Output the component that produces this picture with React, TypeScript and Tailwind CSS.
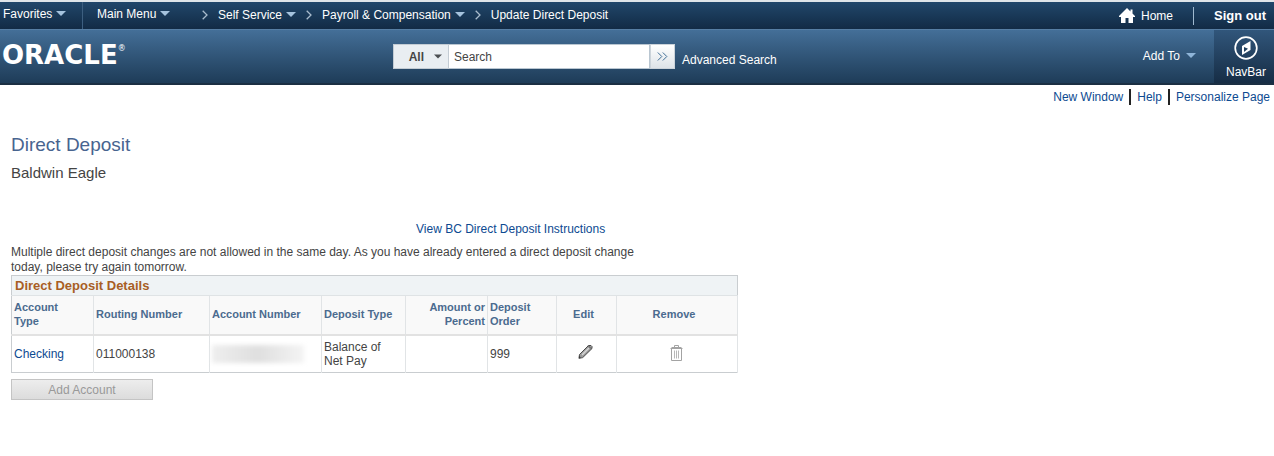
import type { ReactNode } from "react";
import { clsx } from "clsx";

type Account = {
  type: string;
  routing: string;
  depositType: string;
  amount: string;
  order: string;
};

const accounts: Account[] = [
  { type: "Checking", routing: "011000138", depositType: "Balance of Net Pay", amount: "", order: "999" },
];

const columns = [
  { label: "Account Type", width: "w-[82px]", className: "pr-6 text-left" },
  { label: "Routing Number", width: "w-[116px]", className: "text-left" },
  { label: "Account Number", width: "w-[112px]", className: "text-left" },
  { label: "Deposit Type", width: "w-[84px]", className: "text-left" },
  { label: "Amount or Percent", width: "w-[82px]", className: "text-right" },
  { label: "Deposit Order", width: "w-[69px]", className: "text-left" },
  { label: "Edit", width: "w-[60px]", className: "pr-2 text-center" },
  { label: "Remove", width: "w-[121px]", className: "pr-2 text-center" },
];

function Caret({ className }: { className?: string }) {
  return (
    <svg viewBox="0 0 10 5" className={clsx("h-[5px] shrink-0", className)} aria-hidden="true">
      <path d="M0 0h10L5 5z" fill="currentColor" />
    </svg>
  );
}

function Chevron() {
  return (
    <svg viewBox="0 0 6 10" className="h-2.5 w-1.5 shrink-0 text-[#a9bccd]" fill="none" stroke="currentColor" aria-hidden="true">
      <path d="M.7.7 5 5 .7 9.300" strokeWidth="1.3" />
    </svg>
  );
}

function MenuButton({ children }: { children: ReactNode }) {
  return (
    <button type="button" className="flex items-center gap-1 whitespace-nowrap">
      {children}
      <Caret className="w-2.5 text-[#a5c3de]" />
    </button>
  );
}

function TopBar() {
  return (
    <nav className="flex h-[29px] items-center justify-between border-t-2 border-[#dfe5e9] bg-linear-to-b from-[#21476b] to-[#122b45] text-white">
      <div className="flex h-full items-center">
        <div className="flex h-full w-[83px] items-center border-r border-[#3d5f80] pb-1 pl-[3px]">
          <MenuButton>Favorites</MenuButton>
        </div>
        <div className="w-[119px] pb-1 pl-3.5">
          <MenuButton>Main Menu</MenuButton>
        </div>
        <div className="flex items-center gap-2.5 pb-0.5">
          <Chevron />
          <MenuButton>Self Service</MenuButton>
          <Chevron />
          <MenuButton>Payroll &amp; Compensation</MenuButton>
          <Chevron />
          <span className="whitespace-nowrap">Update Direct Deposit</span>
        </div>
      </div>
      <div className="flex items-center pr-2">
        <a href="#home" className="flex items-center gap-1.5">
          <svg viewBox="0 0 16 15" className="h-[15px] w-4" fill="currentColor" aria-hidden="true">
            <path d="M8 0 11.500 3.500V1.500h2V5.500L16 8v1h-2v6H9.500v-5h-3v5H2V9H0V8z" />
          </svg>
          Home
        </a>
        <span className="mx-5 h-[18px] w-px bg-[#9fb9cf]" />
        <a href="#signout" className="text-[13px] font-bold">Sign out</a>
      </div>
    </nav>
  );
}

function SearchForm() {
  return (
    <form className="flex items-center text-[#444]" onSubmit={(e) => e.preventDefault()}>
      <button type="button" className="flex h-[25px] w-14 items-center justify-end gap-2.5 border border-[#c3ccd4] bg-[#e9eef2] pr-1.5 font-bold">
        All
        <Caret className="w-2 text-[#4b4f52]" />
      </button>
      <input
        aria-label="Search"
        defaultValue="Search"
        className="h-[25px] w-[201px] border-y border-r border-[#b9c6d1] bg-white px-[5px] outline-none"
      />
      <button type="submit" aria-label="Run search" className="flex h-[25px] w-[25px] items-center justify-center border border-[#cbd3da] bg-linear-to-b from-white to-[#dde3e8]">
        <svg viewBox="0 0 11 9" className="h-[9px] w-[11px]" fill="none" stroke="#3f6e98" aria-hidden="true">
          <path d="m.8.5 4 4-4 4M5.800.5l4 4-4 4" />
        </svg>
      </button>
      <a href="#advanced" className="mt-1.5 ml-[7px] text-white">Advanced Search</a>
    </form>
  );
}

function Header() {
  return (
    <header className="flex h-14 items-stretch border-t border-b-2 border-t-[#567ea3] border-b-[#1b2f43] bg-linear-to-b from-[#446f98] to-[#1e3c58] text-white">
      <div className="flex w-[393px] items-center pb-1 pl-0.5">
        <a href="#oracle" className="flex items-start font-['DejaVu_Sans'] text-[26px] leading-6 font-bold">
          ORACLE
          <sup className="top-0.5 text-[8px] leading-none font-normal">®</sup>
        </a>
      </div>
      <SearchForm />
      <div className="ml-auto flex items-center pr-[18px] pb-0.5">
        <button type="button" className="flex items-center gap-1.5">
          Add To
          <Caret className="w-2.5 text-[#8fb5d8]" />
        </button>
      </div>
      <button type="button" className="flex w-[60px] flex-col items-center bg-linear-to-b from-[#31567b] to-[#162d45] pt-1.5 pl-1">
        <svg viewBox="0 0 24 24" className="h-6 w-6" fill="none" aria-hidden="true">
          <circle cx="12" cy="12" r="10.800" stroke="#fff" strokeWidth="1.700" />
          <path d="M16.500 5v9L8 19v-9z" fill="#fff" />
          <path d="m10 11 4 1.700-4 3.300z" fill="#21405e" />
        </svg>
        <span className="mt-1 leading-4">NavBar</span>
      </button>
    </header>
  );
}

function PencilIcon() {
  return (
    <svg viewBox="0 0 15 15" className="mx-auto h-[15px] w-[15px]" strokeLinecap="round" strokeLinejoin="round" aria-hidden="true">
      <path d="M1 14 1.500 10.500 10.500 1.500H13L14 2.500V4.500L5 13.300z" fill="#9b9b9b" stroke="#4a4a4a" />
      <path d="m4.500 10.500 6-6" stroke="#d6d6d6" strokeWidth="1.500" />
      <path d="m10.500 2 2.500 2.500" stroke="#555" />
      <path d="M1 14v-2l2 1.500z" fill="#333" />
    </svg>
  );
}

function TrashIcon() {
  return (
    <svg viewBox="0 0 13 16" className="mx-auto h-4 w-[13px]" fill="none" stroke="#a3a3a3" aria-hidden="true">
      <path d="M.5 3.500h12M1.500 2.500h10M4.500 2V.5h4V2M1.500 4v11.500h10V4" />
      <path d="M4.500 5.500v8M6.500 5.500v8M8.500 5.500v8" stroke="#b8b8b8" />
    </svg>
  );
}

function DepositTable() {
  return (
    <table className="w-[727px] table-fixed border-collapse border border-[#c9cdd0] text-[#444]">
      <colgroup>
        {columns.map((column) => (
          <col key={column.label} className={column.width} />
        ))}
      </colgroup>
      <thead>
        <tr className="h-5 bg-[#eff3f5]">
          <th colSpan={8} className="border-b border-[#dfe3e5] px-[3px] text-left text-[13px] leading-[18px] text-[#a85e24]">
            Direct Deposit Details
          </th>
        </tr>
        <tr className="h-[39px] border-b-2 border-[#e2e2e2] bg-[#f9f9f9] text-[11px] leading-3.5 text-[#4b6b8f]">
          {columns.map((column) => (
            <th key={column.label} scope="col" className={clsx("border-r border-[#e1e4e6] px-0.5 pb-0.5", column.className)}>
              {column.label}
            </th>
          ))}
        </tr>
      </thead>
      <tbody>
        {accounts.map((account) => (
          <tr key={account.routing} className="h-[38px] leading-3.5 *:border-r *:border-[#e1e4e6] *:pl-0.5">
            <td><a href="#account" className="text-[#0d4a91]">{account.type}</a></td>
            <td>{account.routing}</td>
            <td>
              <div className="h-[18px] w-[92px] bg-linear-to-r from-[#eeeeee] via-[#dfdfdf] to-[#f4f4f4] blur-[2px]" />
            </td>
            <td className="pr-4">{account.depositType}</td>
            <td className="text-right">{account.amount}</td>
            <td>{account.order}</td>
            <td>
              <button type="button" aria-label="Edit account" className="block w-full pr-1 pb-1"><PencilIcon /></button>
            </td>
            <td>
              <button type="button" aria-label="Remove account" disabled className="block w-full pr-1 pb-0.5"><TrashIcon /></button>
            </td>
          </tr>
        ))}
      </tbody>
    </table>
  );
}

export default function App() {
  return (
    <div className="min-h-screen bg-white font-['Liberation_Sans',Arial,sans-serif] text-[12px] text-[#444]">
      <TopBar />
      <Header />
      <div className="flex justify-end pt-1 pr-1 leading-4 text-[#0d4a91]">
        <a href="#window" className="border-r-2 border-[#222] pr-1.5">New Window</a>
        <a href="#help" className="border-r-2 border-[#222] px-1.5">Help</a>
        <a href="#personalize" className="pl-1.5">Personalize Page</a>
      </div>
      <main className="px-[11px] pt-7">
        <h1 className="text-[19px] leading-6 text-[#48648f]">Direct Deposit</h1>
        <p className="mt-1.5 text-[15px] leading-5">Baldwin Eagle</p>
        <a href="#instructions" className="mt-[38px] ml-[405px] block w-fit leading-4 text-[#0d4a91]">
          View BC Direct Deposit Instructions
        </a>
        <p className="mt-2 max-w-[650px] leading-[15px]">
          Multiple direct deposit changes are not allowed in the same day. As you have already entered a direct deposit change
          today, please try again tomorrow.
        </p>
        <DepositTable />
        <button type="button" disabled className="mt-1.5 h-[21px] w-[142px] border border-[#c4c4c4] bg-linear-to-b from-[#ededed] to-[#dcdcdc] text-[#999]">
          Add Account
        </button>
      </main>
    </div>
  );
}
